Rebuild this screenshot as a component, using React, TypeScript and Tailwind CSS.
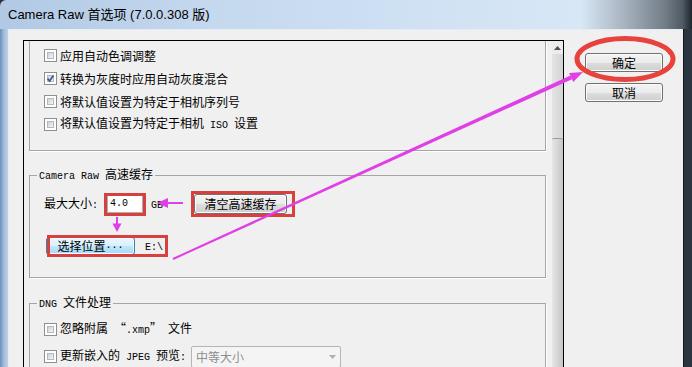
import type { ReactNode } from "react";

const Mono = ({ children }: { children: ReactNode }) => (
  <span className="font-['Liberation_Mono',monospace] text-[10px]">{children}</span>
);

const CheckBox = ({ checked = false }: { checked?: boolean }) => (
  <span className="relative flex h-[13px] w-[13px] shrink-0 border border-[#8e8f8f] bg-white p-[2px]">
    <span className="flex-1 border border-[#b4b8be] bg-[linear-gradient(135deg,#cdd1d7,#f5f5f6)]" />
    {checked && (
      <svg className="absolute left-[1px] top-[1px]" width="9" height="9" viewBox="0 0 9 9">
        <path d="M1.6 4.6 L3.6 7 L7.4 1.6" fill="none" stroke="#3f5794" strokeWidth="1.7" />
      </svg>
    )}
  </span>
);

const CheckRow = ({ checked, children }: { checked?: boolean; children: ReactNode }) => (
  <div className="flex h-[23px] items-center gap-[3px]">
    <CheckBox checked={checked} />
    <span className="whitespace-nowrap">{children}</span>
  </div>
);

const winBtn =
  "flex items-center justify-center rounded-[3px] border border-[#707070] bg-[linear-gradient(to_bottom,#f3f3f3_0%,#ebebeb_50%,#dddddd_51%,#cfcfcf_100%)] shadow-[inset_0_0_0_1px_#fbfbfb]";

const Annotations = () => (
  <svg className="pointer-events-none absolute inset-0" width="692" height="367" viewBox="0 0 692 367">
    <ellipse cx="625" cy="59" rx="48" ry="20.5" fill="none" stroke="#e8423c" strokeWidth="5" />
    <rect x="105.5" y="194.5" width="39" height="20" fill="none" stroke="#d8403e" strokeWidth="3" />
    <rect x="192.5" y="192.5" width="101" height="23" fill="none" stroke="#d8403e" strokeWidth="3" />
    <rect x="48.5" y="236.5" width="118" height="19" fill="none" stroke="#d8403e" strokeWidth="3" />
    <polygon points="173.4,259.9 172.6,258.1 570.4,75.6 572,79.2" fill="#e03fe6" />
    <polygon points="583,72 573.3,82 569.1,72.9" fill="#e03fe6" />
    <line x1="167" y1="203" x2="183" y2="203" stroke="#e03fe6" strokeWidth="2" />
    <polygon points="157,203 168,198 168,208" fill="#e03fe6" />
    <line x1="117" y1="217" x2="117" y2="225" stroke="#e03fe6" strokeWidth="2" />
    <polygon points="117,232 112.5,223.5 121.5,223.5" fill="#e03fe6" />
  </svg>
);

export default function App() {
  return (
    <div className="relative h-[367px] w-[692px] overflow-hidden bg-[#27313c] font-['Noto_Sans_CJK_SC',sans-serif] text-[12px] leading-[14px] text-black">
      <div className="flex h-full flex-col">
        {/* title bar */}
        <div className="flex h-[29px] shrink-0 items-center rounded-tl-[6px] pl-[8px] bg-[linear-gradient(to_right,#b1c9e4_0%,#c4d8ee_30%,#cfe1f3_60%,#d8e7f6_84%,#a9b5c1_90%,#737e89_96%,#505a64_98.6%,#1d252d_100%)]">
          <span className="font-['Liberation_Sans','Noto_Sans_CJK_SC',sans-serif] text-[13px]">
            Camera Raw 首选项 (7.0.0.308 版)
          </span>
        </div>

        <div className="flex min-h-0 flex-1">
          <div className="w-[8px] shrink-0 bg-[linear-gradient(to_right,#6d8fbb,#a8c0dc_55%,#bccfe4)]" />

          {/* client area */}
          <div className="flex flex-1 border-l border-t border-[#e6ecf3] bg-[#f0f0f0] pl-[14px] pt-[10px]">
            {/* scroll panel */}
            <div className="flex w-[541px] shrink-0 border border-b-0 border-black">
              <div className="flex w-[528px] flex-col overflow-hidden">
                <fieldset className="-mt-[12px] ml-[5px] w-[517px] min-w-0 border border-[#a5a5a5] pb-[14px] pl-[14px] pt-[14px] shadow-[1px_1px_0_#fff]">
                  <CheckRow>应用自动色调调整</CheckRow>
                  <CheckRow checked>转换为灰度时应用自动灰度混合</CheckRow>
                  <CheckRow>将默认值设置为特定于相机序列号</CheckRow>
                  <CheckRow>
                    将默认值设置为特定于相机<Mono> ISO </Mono>设置
                  </CheckRow>
                </fieldset>

                <fieldset className="ml-[5px] mt-[16px] w-[517px] min-w-0 border border-[#a5a5a5] shadow-[1px_1px_0_#fff]">
                  <legend className="ml-[7px] px-[2px] leading-[14px]">
                    <Mono>Camera Raw </Mono>高速缓存
                  </legend>
                  <div className="pb-[22px] pl-[14px] pt-[9px]">
                    <div className="flex h-[22px] items-center">
                      <span>
                        最大大小<Mono>:</Mono>
                      </span>
                      <div className="ml-[9px] flex h-[18px] w-[36px] items-center border border-[#abadb3] bg-white pl-[2px]">
                        <Mono>4.0</Mono>
                      </div>
                      <span className="ml-[8px]">
                        <Mono>GB</Mono>
                      </span>
                      <button className={`${winBtn} ml-[31px] h-[20px] w-[93px]`}>清空高速缓存</button>
                    </div>
                    <div className="mt-[22px] flex h-[18px] items-center">
                      <button className="ml-[2px] flex h-[18px] w-[89px] items-center justify-center rounded-[3px] border border-[#3c7fb1] bg-[linear-gradient(to_bottom,#eaf6fd_0%,#d9f0fc_50%,#bee6fd_51%,#a7d9f5_100%)] shadow-[inset_0_0_0_1px_#f2fafe]">
                        选择位置<Mono>...</Mono>
                      </button>
                      <span className="ml-[10px]">
                        <Mono>E:\</Mono>
                      </span>
                    </div>
                  </div>
                </fieldset>

                <fieldset className="ml-[5px] mt-[17px] w-[517px] min-w-0 border border-[#a5a5a5] shadow-[1px_1px_0_#fff]">
                  <legend className="ml-[7px] px-[2px] leading-[14px]">
                    <Mono>DNG </Mono>文件处理
                  </legend>
                  <div className="pb-[10px] pl-[14px] pt-[6px]">
                    <CheckRow>
                      忽略附属<Mono> </Mono>“<Mono>.xmp</Mono>”<Mono> </Mono>文件
                    </CheckRow>
                    <div className="mt-[4px] flex h-[23px] items-center">
                      <CheckBox />
                      <span className="ml-[3px] whitespace-nowrap">
                        更新嵌入的<Mono> JPEG </Mono>预览<Mono>:</Mono>
                      </span>
                      <div className="ml-[5px] flex h-[22px] w-[150px] items-center justify-between rounded-[2px] border border-[#b5b5b5] bg-[#f4f4f4] pl-[4px] pr-[4px] text-[#8e8e8e]">
                        <span>中等大小</span>
                        <svg width="7" height="4" viewBox="0 0 7 4">
                          <path d="M0 0 H7 L3.5 4 Z" fill="#b0b0b0" />
                        </svg>
                      </div>
                    </div>
                  </div>
                </fieldset>
              </div>

              {/* scrollbar */}
              <div className="flex w-[11px] shrink-0 flex-col bg-[linear-gradient(to_right,#dcdcdc,#cbcbcb)]">
                <div className="flex h-[13px] items-center justify-center bg-[#ececec]">
                  <svg width="7" height="4" viewBox="0 0 7 4">
                    <path d="M0 4 H7 L3.5 0 Z" fill="#4f4f4f" />
                  </svg>
                </div>
                <div className="h-[84px] bg-[linear-gradient(to_right,#e4e4e4,#d3d3d3)]" />
                <div className="flex-1 rounded-t-[2px] border-t border-[#9c9c9c] bg-[linear-gradient(to_right,#e6e6e6,#c6c6c6)]" />
              </div>
            </div>

            {/* buttons */}
            <div className="ml-[21px] mt-[13px] flex w-[78px] flex-col">
              <button className={`${winBtn} h-[19px] w-[78px]`}>确定</button>
              <button className={`${winBtn} mt-[11px] h-[19px] w-[78px]`}>取消</button>
            </div>
          </div>

          <div className="w-[9px] shrink-0 border-l border-[#10161c] bg-[#2a3541]" />
        </div>
      </div>
      <Annotations />
    </div>
  );
}
